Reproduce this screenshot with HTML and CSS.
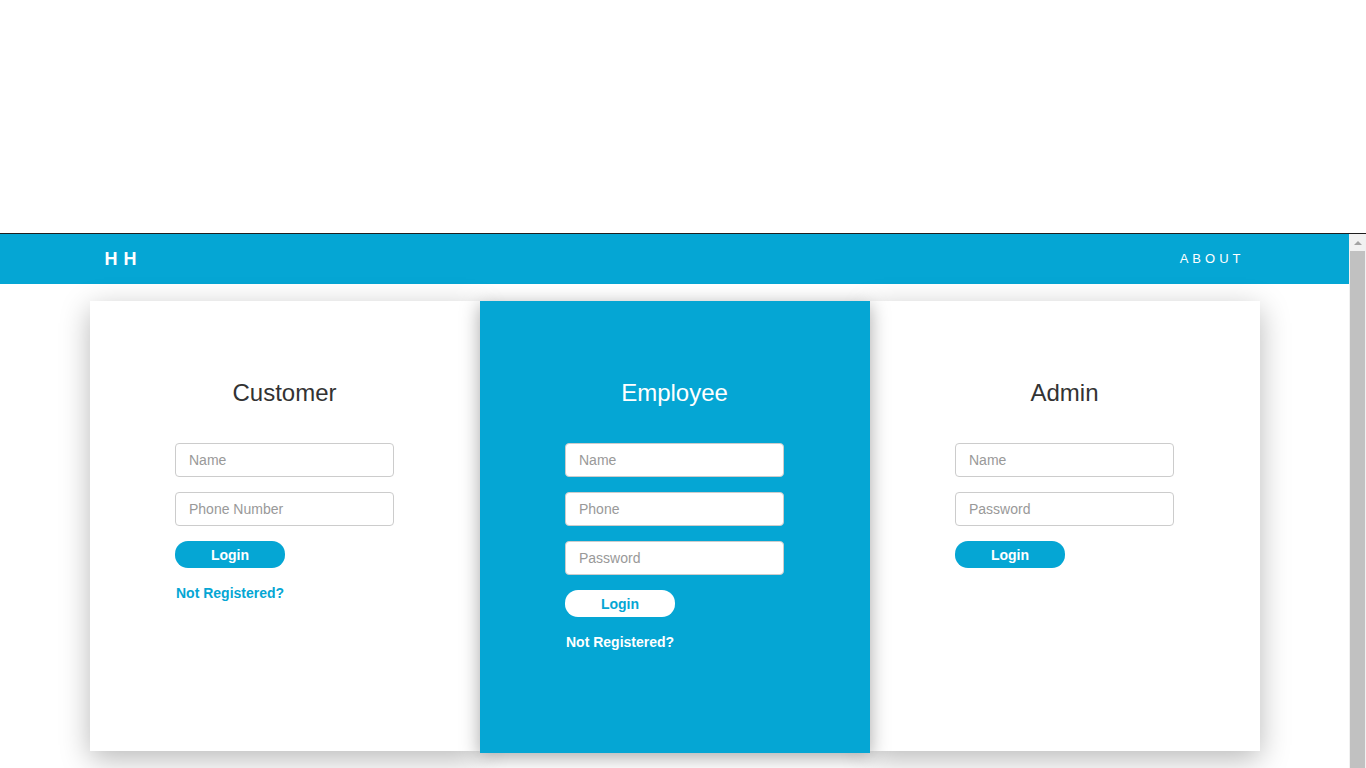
FILE: index.html
```html
<!DOCTYPE html>
<html>
<head>
<meta charset="utf-8">
<title>HH Login</title>
<link rel="stylesheet" href="styles.css">
</head>
<body>
<div class="topspace"></div>
<div class="frame">
  <div class="viewport">
    <nav class="navbar">
      <div class="nav-inner">
        <span class="brand">HH</span>
        <a class="nav-link" href="#">ABOUT</a>
      </div>
    </nav>
    <div class="panels">
      <section class="card">
        <h2 class="card-title">Customer</h2>
        <form class="form">
          <input class="field" type="text" placeholder="Name">
          <input class="field" type="text" placeholder="Phone Number">
          <button class="btn" type="button">Login</button>
          <a class="link" href="#">Not Registered?</a>
        </form>
      </section>
      <section class="card featured">
        <h2 class="card-title">Employee</h2>
        <form class="form">
          <input class="field" type="text" placeholder="Name">
          <input class="field" type="text" placeholder="Phone">
          <input class="field" type="password" placeholder="Password">
          <button class="btn" type="button">Login</button>
          <a class="link" href="#">Not Registered?</a>
        </form>
      </section>
      <section class="card">
        <h2 class="card-title">Admin</h2>
        <form class="form">
          <input class="field" type="text" placeholder="Name">
          <input class="field" type="password" placeholder="Password">
          <button class="btn" type="button">Login</button>
        </form>
      </section>
    </div>
  </div>
  <div class="scrollbar">
    <div class="sb-arrow"></div>
    <div class="sb-thumb"></div>
  </div>
</div>
</body>
</html>
```
FILE: styles.css
```css
html, body {
  margin: 0;
  padding: 0;
  background: #fff;
  font-family: "Liberation Sans", Arial, sans-serif;
  overflow: hidden;
}
.topspace {
  height: 233px;
}
.frame {
  border-top: 1px solid #1e1e1e;
  height: 534px;
  display: flex;
  overflow: hidden;
}
.viewport {
  flex: 1;
  min-width: 0;
  overflow: hidden;
}
.scrollbar {
  width: 17px;
  background: #f1f1f1;
  display: flex;
  flex-direction: column;
  align-items: center;
}
.sb-arrow {
  height: 17px;
  width: 17px;
  display: flex;
  align-items: center;
  justify-content: center;
}
.sb-arrow::before {
  content: "";
  width: 0;
  height: 0;
  border-left: 4px solid transparent;
  border-right: 4px solid transparent;
  border-bottom: 4px solid #a3a3a3;
}
.sb-thumb {
  flex: 1;
  width: 15px;
  background: #c1c1c1;
}
.navbar {
  background: #05a6d4;
  height: 50px;
}
.nav-inner {
  width: 1170px;
  box-sizing: border-box;
  margin: 0 auto;
  padding: 0 15px;
  height: 100%;
  display: flex;
  align-items: center;
  justify-content: space-between;
}
.brand {
  color: #fff;
  font-weight: bold;
  font-size: 18px;
  letter-spacing: 6px;
  margin-right: -6px;
}
.nav-link {
  color: #fff;
  text-decoration: none;
  font-size: 13px;
  letter-spacing: 4px;
  margin-bottom: 2px;
}
.panels {
  width: 1170px;
  margin: 17px auto 0;
  display: grid;
  grid-template-columns: repeat(3, 1fr);
  align-items: start;
}
.card {
  height: 450px;
  box-sizing: border-box;
  background: #fff;
  padding-top: 79px;
  box-shadow: 0 8px 28px rgba(0, 0, 0, 0.28);
}
.card.featured {
  height: 452px;
  background: #05a6d4;
  position: relative;
  z-index: 1;
  box-shadow: 0 4px 18px rgba(0, 0, 0, 0.35);
}
.card-title {
  margin: 0 0 37px;
  text-align: center;
  font-weight: normal;
  font-size: 24px;
  line-height: 26px;
  color: #333;
}
.featured .card-title {
  color: #fff;
}
.form {
  width: 219px;
  margin: 0 auto;
  display: flex;
  flex-direction: column;
  align-items: flex-start;
}
.field {
  width: 219px;
  height: 34px;
  box-sizing: border-box;
  border: 1px solid #ccc;
  border-radius: 4px;
  background: #fff;
  padding: 0 13px;
  margin: 0 0 15px;
  font-family: "Liberation Sans", Arial, sans-serif;
  font-size: 14px;
  color: #555;
}
.field::placeholder {
  color: #999;
}
.btn {
  width: 110px;
  height: 27px;
  border: none;
  border-radius: 13px;
  background: #05a6d4;
  color: #fff;
  font-family: "Liberation Sans", Arial, sans-serif;
  font-weight: bold;
  font-size: 14px;
  padding: 0;
}
.featured .btn {
  background: #fff;
  color: #05a6d4;
}
.link {
  margin-top: 15px;
  margin-left: 1px;
  font-size: 14px;
  line-height: 20px;
  font-weight: bold;
  color: #05a6d4;
  text-decoration: none;
}
.featured .link {
  color: #fff;
}
```
